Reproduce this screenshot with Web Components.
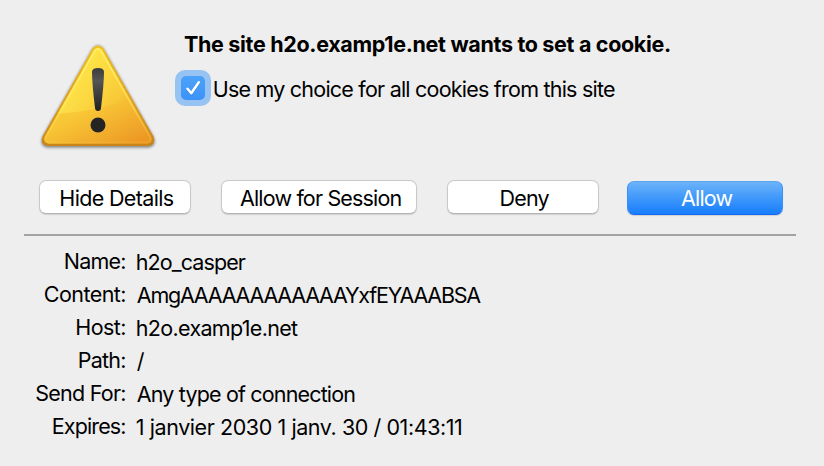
<!DOCTYPE html>
<html lang="en">
<head>
<meta charset="utf-8">
<title>Cookie permission</title>
<style>
html,body{margin:0;height:100%;background:#eeeeee;overflow:hidden}
body{font:21.5px/33px Inter,"Liberation Sans",sans-serif;color:#000}
</style>
</head>
<body>
<cookie-dialog></cookie-dialog>
<script>
const pen = document.createElement('canvas').getContext('2d');

/* A line of text whose glyphs span exactly the given width, edge to edge. */
class FitText extends HTMLElement {
  connectedCallback() {
    const root = this.attachShadow({mode: 'open'});
    root.innerHTML = `<style>:host{display:block;white-space:pre;flex:none}span{display:block}</style><span><slot></slot></span>`;
    const cs = getComputedStyle(this);
    const text = this.textContent;
    pen.font = `${cs.fontWeight} ${cs.fontSize} ${cs.fontFamily}`;
    const m = pen.measureText(text);
    const width = +this.getAttribute('span');
    const ink = m.actualBoundingBoxLeft + m.actualBoundingBoxRight;
    this.style.width = width + 'px';
    const span = root.querySelector('span');
    span.style.marginLeft = m.actualBoundingBoxLeft + 'px';
    if (text.length > 1) span.style.letterSpacing = (width - ink) / (text.length - 1) + 'px';
  }
}
customElements.define('fit-text', FitText);

class WarningIcon extends HTMLElement {
  constructor() {
    super();
    this.attachShadow({mode: 'open'}).innerHTML = `
<style>:host{display:block;width:124px;height:116px}svg{display:block}</style>
<svg width="124" height="116" viewBox="36 40 124 116">
  <defs>
    <linearGradient id="b" x1="0.3" y1="0" x2="0.85" y2="1"><stop offset="0" stop-color="#fddf3c"/><stop offset=".55" stop-color="#f8c636"/><stop offset="1" stop-color="#ec9824"/></linearGradient>
    <linearGradient id="e" x1="0" y1="0" x2="0" y2="1"><stop offset="0" stop-color="#f2c01e"/><stop offset=".6" stop-color="#dc9d22"/><stop offset="1" stop-color="#c98518"/></linearGradient>
    <linearGradient id="h" x1="0" y1="0" x2="0" y2="1"><stop offset="0" stop-color="#fff06a"/><stop offset="1" stop-color="#fff06a" stop-opacity=".12"/></linearGradient>
    <linearGradient id="g" gradientUnits="userSpaceOnUse" x1="75" y1="85" x2="122" y2="108"><stop offset="0" stop-color="#ffe84e" stop-opacity=".65"/><stop offset="1" stop-color="#ffe348" stop-opacity="0"/></linearGradient>
    <linearGradient id="m" x1="0" y1="0" x2="0" y2="1"><stop offset="0" stop-color="#3c3c3c"/><stop offset=".3" stop-color="#555"/><stop offset="1" stop-color="#202020"/></linearGradient>
    <filter id="s" x="-10%" y="-10%" width="120%" height="125%"><feGaussianBlur stdDeviation="1.6"/></filter>
  </defs>
  <path d="M92.5 49Q98 42 103.500 49L153.500 137Q157 146 149 147.500H47Q39 146 42.500 137Z" fill="#000" opacity=".48" filter="url(#s)"/>
  <path d="M92.500 48.500Q98 42.500 103.500 48.500L153.500 136.500Q156.500 144.500 148.500 146H47.500Q39.500 144.500 42.500 136.500Z" fill="url(#e)"/>
  <path d="M94.200 49.700Q98 46 101.800 49.700L151.300 136.500Q153.500 142.500 147.500 143.800H48.500Q42.500 142.500 44.700 136.500Z" fill="url(#b)"/>
  <path d="M94.200 49.700Q98 46 101.800 49.700L130 99Q100 111 58 113.500Z" fill="url(#g)"/>
  <path d="M95.100 50.500Q98 47.500 100.900 50.500L150 136.800Q152 141.500 147 142.500H49Q44 141.500 46 136.800Z" fill="none" stroke="url(#h)" stroke-width="1.600"/>
  <path d="M92 72Q92 68 98 68Q104 68 104 72Q104 83 101 108Q100.800 111 98 111Q95.200 111 95 108Q92 83 92 72Z" fill="url(#m)"/>
  <circle cx="98" cy="125" r="7.500" fill="#242424"/>
</svg>`;
  }
}
customElements.define('warning-icon', WarningIcon);

class CheckBox extends HTMLElement {
  constructor() {
    super();
    this.attachShadow({mode: 'open'}).innerHTML = `
<style>
:host{display:flex;align-items:center;gap:2.700px;height:36px}
i{box-sizing:border-box;width:36px;height:36px;padding:6px;border-radius:10px;background:#97c3f3;flex:none}
b{display:block;width:24px;height:24px;border-radius:5px;background:linear-gradient(#4ca2f9,#3b93f8)}
svg{display:block}
div{padding-top:2px}
</style>
<i><b><svg width="24" height="24" viewBox="0 0 24 24" fill="none" stroke-linecap="round" stroke-linejoin="round"><path d="M6.500 13.800L10.300 18.300L17.800 7.300" stroke="#2372ce" stroke-opacity=".5" stroke-width="2.500"/><path d="M6.500 12.800L10.300 17.300L17.800 6.300" stroke="#fff" stroke-width="2.500"/></svg></b></i>
<div><slot></slot></div>`;
  }
}
customElements.define('check-box', CheckBox);

class PushButton extends HTMLElement {
  constructor() {
    super();
    this.attachShadow({mode: 'open'}).innerHTML = `
<style>
:host{display:flex;box-sizing:border-box;height:34px;border:1px solid #c9c9c9;border-bottom-color:#b5b5b5;border-radius:7px;background:#fff;box-shadow:0 1px 1px rgba(0,0,0,.13);line-height:34px}
:host([primary]){margin-top:1px;line-height:32px;color:#fff;border-color:#5aa5ef #3c8ff6 #1469f3;background:linear-gradient(#6fb5fa,#3f98fb 50%,#167cfd) border-box}
</style><slot></slot>`;
  }
}
customElements.define('push-button', PushButton);

class DetailRow extends HTMLElement {
  constructor() {
    super();
    this.attachShadow({mode: 'open'}).innerHTML = `
<style>
:host{display:grid;grid-template-columns:125.300px 1fr;column-gap:11.500px;height:33px}
.k{display:flex;justify-content:flex-end}
.v{padding-top:1px}
</style><div class="k"><slot name="key"></slot></div><div class="v"><slot></slot></div>`;
  }
}
customElements.define('detail-row', DetailRow);

class CookieDialog extends HTMLElement {
  constructor() {
    super();
    this.attachShadow({mode: 'open'}).innerHTML = `
<style>
:host{display:flex;flex-direction:column;height:466px}
header{display:flex;height:180px;box-sizing:border-box;padding-left:36px}
warning-icon{margin-top:40px}
.msg{padding:28px 0 0 15px}
h1{margin:0 0 9px 9px;font-size:21.500px;font-weight:700;line-height:33px}
nav{display:flex;height:54px;padding-left:39px}
hr{margin:0 28px 0 24px;border:0;height:2px;background:#a3a3a3;flex:none}
section{padding-top:9px}
</style>
<header>
  <warning-icon></warning-icon>
  <div class="msg">
    <h1><fit-text span="486">The site h2o.examp1e.net wants to set a cookie.</fit-text></h1>
    <check-box><fit-text span="401.300">Use my choice for all cookies from this site</fit-text></check-box>
  </div>
</header>
<nav>
  <push-button style="width:152px;padding-left:20.300px"><fit-text span="113.500">Hide Details</fit-text></push-button>
  <push-button style="width:196px;margin-left:30px;padding-left:18px"><fit-text span="161.500">Allow for Session</fit-text></push-button>
  <push-button style="width:152px;margin-left:30px;padding-left:52.500px"><fit-text span="49">Deny</fit-text></push-button>
  <push-button primary style="width:156px;margin-left:28px;padding-left:53px"><fit-text span="51.500">Allow</fit-text></push-button>
</nav>
<hr>
<section>
  <detail-row><fit-text slot="key" span="60.500">Name:</fit-text><fit-text span="109">h2o_casper</fit-text></detail-row>
  <detail-row><fit-text slot="key" span="80.500">Content:</fit-text><fit-text span="344.500">AmgAAAAAAAAAAAAYxfEYAAABSA</fit-text></detail-row>
  <detail-row><fit-text slot="key" span="49">Host:</fit-text><fit-text span="161.300">h2o.examp1e.net</fit-text></detail-row>
  <detail-row><fit-text slot="key" span="46.500">Path:</fit-text><fit-text span="6">/</fit-text></detail-row>
  <detail-row><fit-text slot="key" span="89">Send For:</fit-text><fit-text span="218.500">Any type of connection</fit-text></detail-row>
  <detail-row><fit-text slot="key" span="72.500">Expires:</fit-text><fit-text span="324.300">1 janvier 2030 1 janv. 30 / 01:43:11</fit-text></detail-row>
</section>`;
  }
}
customElements.define('cookie-dialog', CookieDialog);
</script>
</body>
</html>
